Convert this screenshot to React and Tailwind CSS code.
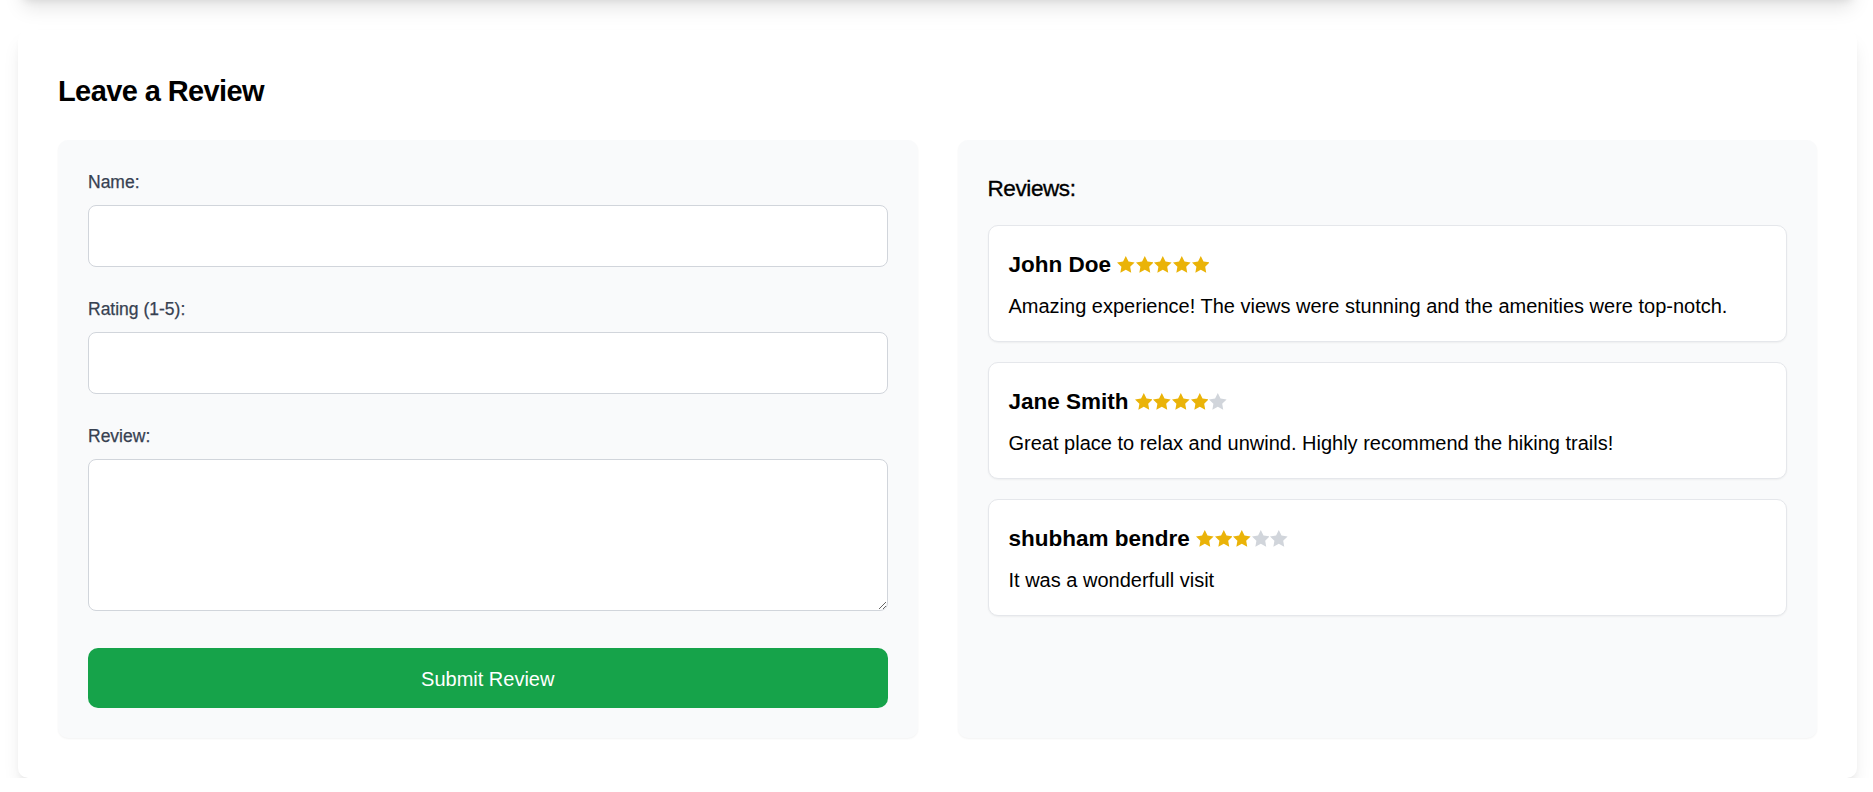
import { useState } from 'react';

const initialReviews = [
  { name: 'John Doe', rating: 5, text: 'Amazing experience! The views were stunning and the amenities were top-notch.' },
  { name: 'Jane Smith', rating: 4, text: 'Great place to relax and unwind. Highly recommend the hiking trails!' },
  { name: 'shubham bendre', rating: 3, text: 'It was a wonderfull visit' },
];

const cardShadow = 'shadow-[0_12px_19px_-4px_rgba(0,0,0,0.1),0_5px_8px_-5px_rgba(0,0,0,0.1)]';

function Stars({ rating }) {
  return (
    <span className="inline-flex items-end gap-[1px] align-[-1px]">
      {[1, 2, 3, 4, 5].map((n) => (
        <svg
          key={n}
          viewBox="2 2 20 19.1"
          className={`h-[16.8px] w-[17.6px] ${n <= rating ? 'fill-[#eab308]' : 'fill-[#d1d5db]'}`}
        >
          <polygon points="12,2 15.09,8.26 22,9.27 17,14.14 18.18,21.02 12,17.77 5.82,21.02 7,14.14 2,9.27 8.91,8.26" />
        </svg>
      ))}
    </span>
  );
}

function Field({ label, children, last }) {
  return (
    <div className={last ? 'mb-[37px]' : 'mb-[30px]'}>
      <label className="mb-[10px] block pt-[1.2px] text-[17.5px] leading-[23.8px] font-medium text-[#374151] [-webkit-text-stroke:0.25px_#374151]">
        {label}
      </label>
      {children}
    </div>
  );
}

export default function App() {
  const [reviews] = useState(initialReviews);
  const [name, setName] = useState('');
  const [rating, setRating] = useState('');
  const [review, setReview] = useState('');

  const inputCls =
    'block h-[62px] w-full rounded-[8px] border border-[#d1d5db] bg-white px-[15px] text-[20px] leading-[30px] outline-none';

  return (
    <div className="min-h-screen bg-white font-['Liberation_Sans',Arial,sans-serif] text-black">
      {/* section above, scrolled out of view */}
      <div className={`-mt-[300px] ml-[18px] mr-[16px] h-[300px] rounded-[10px] bg-white ${cardShadow}`} />

      <section className={`mt-[30px] ml-[18px] mr-[16px] rounded-[10px] bg-white p-[40px] ${cardShadow}`}>
        <h2 className="mb-[30px] pt-[2px] text-[29px] leading-[38px] font-bold tracking-[-0.6px]">Leave a Review</h2>

        <div className="grid grid-cols-2 gap-[40px]">
          <form
            className="rounded-[10px] bg-[#f9fafb] p-[30px] shadow-[0_1px_2px_rgba(0,0,0,0.05)]"
            onSubmit={(e) => e.preventDefault()}
          >
            <Field label="Name:">
              <input className={inputCls} value={name} onChange={(e) => setName(e.target.value)} />
            </Field>
            <Field label="Rating (1-5):">
              <input className={inputCls} value={rating} onChange={(e) => setRating(e.target.value)} />
            </Field>
            <Field label="Review:" last>
              <textarea
                rows={4}
                className="block h-[152px] w-full rounded-[8px] border border-[#d1d5db] bg-white p-[15px] text-[20px] leading-[30px] outline-none"
                value={review}
                onChange={(e) => setReview(e.target.value)}
              />
            </Field>
            <button
              type="submit"
              className="block h-[60px] w-full rounded-[10px] bg-[#16a34a] pt-[3px] text-[20px] leading-[30px] text-white"
            >
              Submit Review
            </button>
          </form>

          <div className="rounded-[10px] bg-[#f9fafb] p-[30px] shadow-[0_1px_2px_rgba(0,0,0,0.05)]">
            <h3 className="mb-[20px] pt-[1.5px] text-[22.5px] leading-[33.5px] tracking-[-0.4px] [-webkit-text-stroke:0.35px_#000]">
              Reviews:
            </h3>
            <div className="flex flex-col gap-[20px]">
              {reviews.map((r, i) => (
                <div
                  key={i}
                  className="rounded-[10px] border border-[#e5e7eb] bg-white p-[20px] shadow-[0_1px_2px_rgba(0,0,0,0.05)]"
                >
                  <h4 className="mb-[10px] pt-[1.5px] text-[22.5px] leading-[33.5px] font-bold">
                    {r.name} <Stars rating={r.rating} />
                  </h4>
                  <p className="pt-[1.35px] text-[20px] leading-[28.65px]">{r.text}</p>
                </div>
              ))}
            </div>
          </div>
        </div>
      </section>
    </div>
  );
}
